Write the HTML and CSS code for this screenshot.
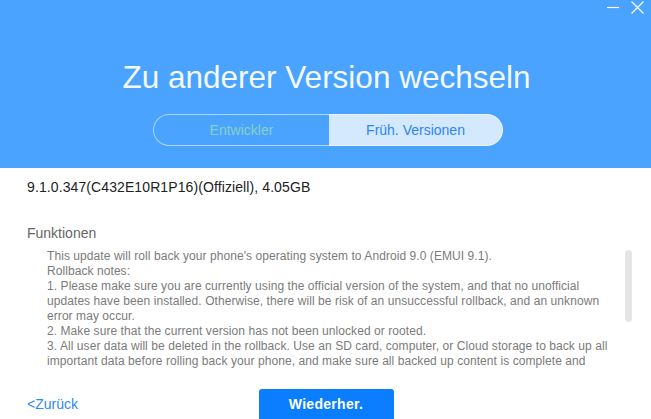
FILE: index.html
```html
<!DOCTYPE html>
<html lang="de">
<head>
<meta charset="utf-8">
<title>Zu anderer Version wechseln</title>
<link rel="stylesheet" href="styles.css">
</head>
<body>
<div class="app">
  <header class="header">
    <div class="winctl">
      <svg class="ic-min" width="12" height="12" viewBox="0 0 12 12"><line x1="0" y1="6.5" x2="12" y2="6.5" stroke="#fff" stroke-width="1.2"/></svg>
      <svg class="ic-close" width="13" height="13" viewBox="0 0 13 13"><path d="M0.5 0.5 L12.5 12.5 M12.5 0.5 L0.5 12.5" stroke="#fff" stroke-width="1.2" fill="none"/></svg>
    </div>
    <h1 class="title">Zu anderer Version wechseln</h1>
    <div class="tabs">
      <div class="tab tab-off">Entwickler</div>
      <div class="tab tab-on">Früh. Versionen</div>
    </div>
  </header>
  <main class="content">
    <div class="version">9.1.0.347(C432E10R1P16)(Offiziell), 4.05GB</div>
    <div class="section-title">Funktionen</div>
    <div class="notes-wrap">
      <div class="notes">
        <p>This update will roll back your phone's operating system to Android 9.0 (EMUI 9.1).</p>
        <p>Rollback notes:</p>
        <p>1. Please make sure you are currently using the official version of the system, and that no unofficial updates have been installed. Otherwise, there will be risk of an unsuccessful rollback, and an unknown error may occur.</p>
        <p>2. Make sure that the current version has not been unlocked or rooted.</p>
        <p>3. All user data will be deleted in the rollback. Use an SD card, computer, or Cloud storage to back up all important data before rolling back your phone, and make sure all backed up content is complete and available.</p>
      </div>
      <div class="scrollbar"><div class="thumb"></div></div>
    </div>
  </main>
  <footer class="footer">
    <a class="back">&lt;Zurück</a>
    <button class="primary">Wiederher.</button>
    <span></span>
  </footer>
</div>
</body>
</html>
```
FILE: styles.css
```css
html, body {
  margin: 0;
  padding: 0;
}
body {
  width: 651px;
  height: 419px;
  overflow: hidden;
  background: #ffffff;
  font-family: "Liberation Sans", Arial, sans-serif;
}
.app {
  display: flex;
  flex-direction: column;
  height: 419px;
}
.header {
  position: relative;
  height: 168px;
  background: #4aa3fe;
  display: flex;
  flex-direction: column;
  align-items: center;
  box-sizing: border-box;
  padding-top: 59px;
  padding-left: 2px;
}
.winctl {
  position: absolute;
  top: 1px;
  right: 7px;
  display: flex;
  align-items: flex-start;
  gap: 12px;
}
.ic-min {
  display: block;
}
.ic-close {
  display: block;
}
.title {
  margin: 0;
  font-weight: normal;
  font-size: 31.5px;
  line-height: 36px;
  color: #f4f9ff;
  white-space: nowrap;
}
.tabs {
  margin-top: 19px;
  display: flex;
  width: 350px;
  height: 32px;
  margin-left: 3px;
}
.tab {
  flex: 1;
  display: flex;
  align-items: center;
  justify-content: center;
  font-size: 14px;
  box-sizing: border-box;
}
.tab-off {
  flex: 0 0 176px;
  border: 1px solid rgba(255, 255, 255, 0.55);
  border-right: none;
  border-radius: 16px 0 0 16px;
  color: #86d2c6;
}
.tab-on {
  background: #d4e8fe;
  border: 1px solid rgba(255, 255, 255, 0.55);
  border-left: none;
  border-radius: 0 16px 16px 0;
  color: #2c86f5;
}
.content {
  flex: 1;
  display: flex;
  flex-direction: column;
  padding: 9px 0 0 27px;
}
.version {
  font-size: 14px;
  line-height: 20px;
  letter-spacing: 0.1px;
  color: #222;
}
.section-title {
  margin-top: 28px;
  font-size: 14px;
  line-height: 16px;
  color: #666;
}
.notes-wrap {
  margin-top: 8px;
  display: flex;
  height: 120px;
}
.notes {
  width: 572px;
  padding-left: 20px;
  height: 120px;
  overflow: hidden;
  font-size: 12px;
  line-height: 15px;
  letter-spacing: 0.07px;
  color: #7b7b7b;
}
.notes p {
  margin: 0;
}
.scrollbar {
  margin-left: 6px;
  width: 7px;
  padding-top: 1px;
}
.thumb {
  width: 7px;
  height: 72px;
  border-radius: 4px;
  background: #e5e5e5;
}
.footer {
  display: grid;
  grid-template-columns: 1fr auto 1fr;
  align-items: end;
  height: 30px;
}
.back {
  padding-left: 27px;
  font-size: 14px;
  line-height: 18px;
  color: #2e88f5;
  align-self: center;
  cursor: pointer;
}
.primary {
  width: 135px;
  height: 30px;
  border: none;
  border-radius: 3px 3px 0 0;
  background: #0a7efe;
  color: #fff;
  font-family: "Liberation Sans", Arial, sans-serif;
  font-weight: bold;
  font-size: 14px;
  letter-spacing: 0.3px;
  padding: 0;
  margin-left: 1px;
}
```
